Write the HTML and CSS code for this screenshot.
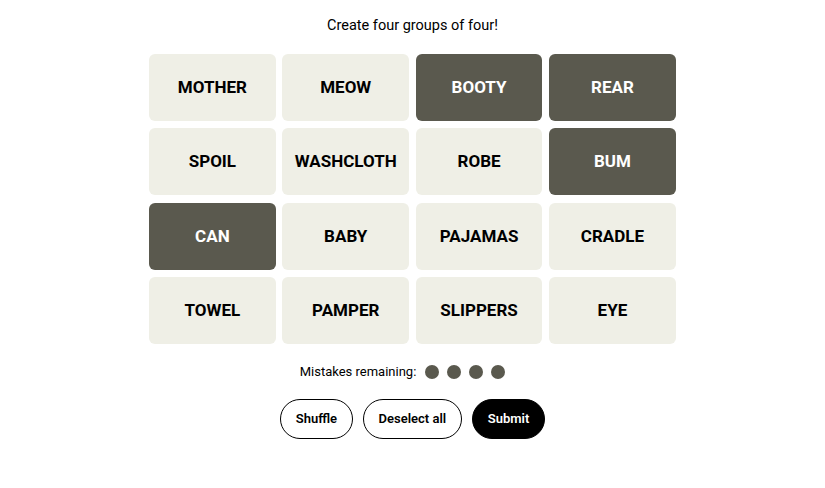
FILE: index.html
```html
<!DOCTYPE html>
<html>
<head>
<meta charset="utf-8">
<link rel="stylesheet" href="styles.css">
</head>
<body>
<main class="game">
  <p class="prompt">Create four groups of four!</p>
  <div class="board">
    <div class="tile">MOTHER</div>
    <div class="tile">MEOW</div>
    <div class="tile selected">BOOTY</div>
    <div class="tile selected">REAR</div>
    <div class="tile">SPOIL</div>
    <div class="tile">WASHCLOTH</div>
    <div class="tile">ROBE</div>
    <div class="tile selected">BUM</div>
    <div class="tile selected">CAN</div>
    <div class="tile">BABY</div>
    <div class="tile">PAJAMAS</div>
    <div class="tile">CRADLE</div>
    <div class="tile">TOWEL</div>
    <div class="tile">PAMPER</div>
    <div class="tile">SLIPPERS</div>
    <div class="tile">EYE</div>
  </div>
  <div class="mistakes">
    <span class="mistakes-label">Mistakes remaining:</span>
    <span class="dots"><span class="dot"></span><span class="dot"></span><span class="dot"></span><span class="dot"></span></span>
  </div>
  <div class="actions">
    <button class="btn">Shuffle</button>
    <button class="btn">Deselect all</button>
    <button class="btn primary">Submit</button>
  </div>
</main>
</body>
</html>
```
FILE: styles.css
```css
html, body {
  margin: 0;
  padding: 0;
  background: #ffffff;
}
body {
  font-family: "Roboto", "Liberation Sans", sans-serif;
  color: #000;
}
.game {
  display: flex;
  flex-direction: column;
  align-items: center;
  padding-top: 16px;
}
.prompt {
  margin: 0;
  font-size: 14.5px;
  line-height: 20px;
  font-weight: 400;
}
.board {
  margin-top: 18px;
  display: grid;
  grid-template-columns: repeat(4, 126.75px);
  grid-auto-rows: 67px;
  gap: 7.3px 6.6px;
  width: 527px;
}
.tile {
  background: #efefe6;
  border-radius: 6px;
  display: flex;
  align-items: center;
  justify-content: center;
  font-weight: 700;
  font-size: 17px;
  padding-bottom: 1px;
}
.tile.selected {
  background: #5a594e;
  color: #fff;
}
.mistakes {
  margin-top: 20px;
  margin-right: 20px;
  display: flex;
  align-items: center;
  gap: 9px;
  font-size: 13px;
  height: 16px;
}
.dots {
  display: flex;
  gap: 8px;
}
.dot {
  width: 14px;
  height: 14px;
  border-radius: 50%;
  background: #5a594e;
}
.actions {
  margin-top: 19px;
  display: flex;
  gap: 9.5px;
}
.btn {
  height: 40px;
  border: 1px solid #000;
  border-radius: 20px;
  background: #fff;
  color: #000;
  font-family: inherit;
  font-size: 13px;
  font-weight: 600;
  padding: 0 15px;
}
.btn.primary {
  background: #000;
  color: #fff;
}
```
